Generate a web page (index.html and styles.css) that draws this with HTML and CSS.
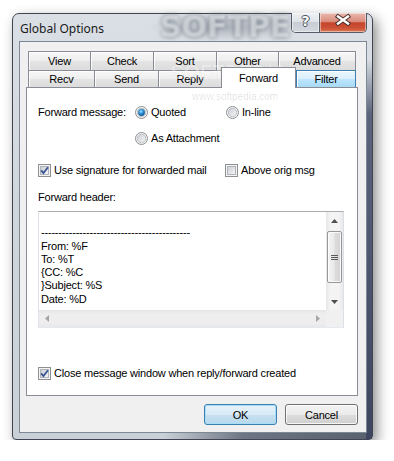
FILE: index.html
```html
<!DOCTYPE html>
<html>
<head>
<meta charset="utf-8">
<title>Global Options</title>
<link rel="stylesheet" href="styles.css">
</head>
<body>
<div class="window">
  <div class="wm-title">SOFTPE</div>
  <div class="titlebar">
    <span class="title">Global Options</span>
    <div class="caption-btns">
      <span class="cbtn help">?</span>
      <span class="cbtn close">
        <svg width="46" height="19" viewBox="0 0 46 19">
          <path d="M18 3.5 28 10.5 M28 3.5 18 10.5" stroke="#4a2f2a" stroke-width="4.4" stroke-linecap="square" fill="none"/>
          <path d="M18 3.5 28 10.5 M28 3.5 18 10.5" stroke="#ffffff" stroke-width="2.4" stroke-linecap="square" fill="none"/>
        </svg>
      </span>
    </div>
  </div>
  <div class="client">
    <div class="tabs">
      <div class="tabrow row1">
        <div class="tab w62">View</div>
        <div class="tab w63">Check</div>
        <div class="tab w63">Sort</div>
        <div class="tab w62">Other</div>
        <div class="tab w78 last">Advanced</div>
      </div>
      <div class="tabrow row2">
        <div class="tab w66">Recv</div>
        <div class="tab w64">Send</div>
        <div class="tab w63">Reply</div>
        <div class="tab w75 sel">Forward</div>
        <div class="tab w60 last hot">Filter</div>
      </div>
    </div>
    <div class="panel">
      <div class="row row-fwd">
        <span class="lbl-fwd">Forward message:</span>
        <span class="opt w91">
          <svg class="rb" width="13" height="13" viewBox="0 0 13 13"><circle cx="6.5" cy="6.5" r="6" fill="#f4f4f4" stroke="#8e8f8f"/><circle cx="6.5" cy="6.5" r="4.2" fill="url(#radIn)" stroke="#b3b7bd" stroke-width=".8"/><circle cx="6.5" cy="6.5" r="3.4" fill="url(#dot)"/></svg>
          <span>Quoted</span>
        </span>
        <span class="opt">
          <svg class="rb" width="13" height="13" viewBox="0 0 13 13"><circle cx="6.5" cy="6.5" r="6" fill="#f4f4f4" stroke="#8e8f8f"/><circle cx="6.5" cy="6.5" r="4.2" fill="url(#radIn)" stroke="#b3b7bd" stroke-width=".8"/></svg>
          <span>In-line</span>
        </span>
      </div>
      <div class="row row-att">
        <span class="opt">
          <svg class="rb" width="13" height="13" viewBox="0 0 13 13"><circle cx="6.5" cy="6.5" r="6" fill="#f4f4f4" stroke="#8e8f8f"/><circle cx="6.5" cy="6.5" r="4.2" fill="url(#radIn)" stroke="#b3b7bd" stroke-width=".8"/></svg>
          <span>As Attachment</span>
        </span>
      </div>
      <div class="row row-sig">
        <span class="opt w187">
          <svg class="cb" width="13" height="13" viewBox="0 0 13 13"><rect x=".5" y=".5" width="12" height="12" fill="#f4f4f4" stroke="#8e8f8f"/><rect x="2.5" y="2.5" width="8" height="8" fill="url(#boxIn)" stroke="#b0b5bb"/><path d="M3.2 6.4 5.4 9.1 10 3.2" fill="none" stroke="#3a5394" stroke-width="1.8"/></svg>
          <span>Use signature for forwarded mail</span>
        </span>
        <span class="opt">
          <svg class="cb" width="13" height="13" viewBox="0 0 13 13"><rect x=".5" y=".5" width="12" height="12" fill="#f4f4f4" stroke="#8e8f8f"/><rect x="2.5" y="2.5" width="8" height="8" fill="url(#boxIn)" stroke="#b0b5bb"/></svg>
          <span>Above orig msg</span>
        </span>
      </div>
      <div class="row row-hdr">Forward header:</div>
      <div class="memo">
        <div class="memo-text">
          <div>&nbsp;</div>
          <div>-------------------------------------------</div>
          <div>From: %F</div>
          <div>To: %T</div>
          <div>{CC: %C</div>
          <div>}Subject: %S</div>
          <div>Date: %D</div>
        </div>
        <div class="vscroll">
          <div class="sarrow"><svg width="7" height="4" viewBox="0 0 7 4"><polygon points="0,4 3.5,0 7,4" fill="#4f4f4f"/></svg></div>
          <div class="strack">
            <div class="thumb">
              <svg width="7" height="5" viewBox="0 0 7 5"><path d="M0 .5H7M0 2.5H7M0 4.5H7" stroke="#5a5a5a" stroke-width="1"/></svg>
            </div>
          </div>
          <div class="sarrow"><svg width="7" height="4" viewBox="0 0 7 4"><polygon points="0,0 7,0 3.5,4" fill="#4f4f4f"/></svg></div>
        </div>
        <div class="hscroll">
          <div class="harrow"><svg width="4" height="7" viewBox="0 0 4 7"><polygon points="4,0 4,7 0,3.5" fill="#a5a5a5"/></svg></div>
          <div class="harrow"><svg width="4" height="7" viewBox="0 0 4 7"><polygon points="0,0 0,7 4,3.5" fill="#a5a5a5"/></svg></div>
        </div>
        <div class="corner"></div>
      </div>
      <div class="row row-close">
        <span class="opt">
          <svg class="cb" width="13" height="13" viewBox="0 0 13 13"><rect x=".5" y=".5" width="12" height="12" fill="#f4f4f4" stroke="#8e8f8f"/><rect x="2.5" y="2.5" width="8" height="8" fill="url(#boxIn)" stroke="#b0b5bb"/><path d="M3.2 6.4 5.4 9.1 10 3.2" fill="none" stroke="#3a5394" stroke-width="1.8"/></svg>
          <span>Close message window when reply/forward created</span>
        </span>
      </div>
    </div>
    <div class="buttons">
      <button class="btn default">OK</button>
      <button class="btn">Cancel</button>
    </div>
    <div class="wm-tabs">SOFTPEDIA</div>
    <div class="wm-url">www.softpedia.com</div>
  </div>
</div>
<svg class="defs" width="0" height="0">
  <defs>
    <linearGradient id="boxIn" x1="0" y1="0" x2="1" y2="1"><stop offset="0" stop-color="#c9cdd3"/><stop offset="1" stop-color="#f7f7f7"/></linearGradient>
    <linearGradient id="radIn" x1="0" y1="0" x2="1" y2="1"><stop offset="0" stop-color="#c9cdd3"/><stop offset="1" stop-color="#f7f7f7"/></linearGradient>
    <radialGradient id="dot" cx="0.42" cy="0.35" r="0.7"><stop offset="0" stop-color="#a6e6ff"/><stop offset="0.45" stop-color="#2d90d8"/><stop offset="1" stop-color="#0b4c88"/></radialGradient>
  </defs>
</svg>
</body>
</html>
```
FILE: styles.css
```css
* { box-sizing: border-box; }
html, body { margin: 0; background: #ffffff; }
body {
  padding: 13px 0 0 12px;
  font-family: "Liberation Sans", Arial, sans-serif;
  font-size: 11px;
  letter-spacing: -0.2px;
  color: #000;
}

.window {
  position: relative;
  width: 361px;
  height: 427px;
  border: 1px solid #3f4652;
  border-radius: 7px 7px 4px 4px;
  padding: 0 5px 6px 6px;
  display: flex;
  flex-direction: column;
  box-shadow: 4px 5px 13px rgba(0, 0, 0, 0.45);
  background:
    linear-gradient(to bottom, rgba(70,78,100,0) 0, rgba(70,78,100,0) 45px, #5c647c 100px, #3e465f 100%) right top / 6px 100% no-repeat,
    linear-gradient(to right, rgba(95,102,116,0) 0, rgba(95,102,116,0) 150px, #6d7584 230px, #59616e 100%) left bottom / 100% 7px no-repeat,
    radial-gradient(ellipse 80px 14px at 215px 13px, rgba(130,138,150,0.5), rgba(130,138,150,0)),
    linear-gradient(to bottom, #dadfe5, #cfd5dc 50%, #cad0d7);
}

.wm-title {
  position: absolute;
  left: 147px;
  top: -2px;
  font-family: "DejaVu Sans", sans-serif;
  font-weight: bold;
  font-size: 30px;
  line-height: 30px;
  letter-spacing: 0;
  color: rgba(236, 239, 243, 0.7);
  text-shadow: 0 0 4px rgba(60, 68, 82, 0.75);
  filter: blur(1.2px);
}

.titlebar {
  height: 27px;
  display: flex;
  align-items: center;
  justify-content: space-between;
  padding-left: 1px;
}
.title {
  font-family: "Noto Sans", "Open Sans", sans-serif;
  font-size: 12px;
  letter-spacing: 0;
  color: #1b1b1b;
  padding-top: 1px;
}
.caption-btns {
  position: relative;
  z-index: 2;
  align-self: flex-start;
  margin-top: -1px;
  display: flex;
  height: 20px;
  border: 1px solid #555c68;
  border-top: none;
  border-radius: 0 0 5px 5px;
  overflow: hidden;
}
.cbtn {
  display: flex;
  justify-content: center;
  height: 100%;
  box-shadow: inset 0 0 0 1px rgba(255, 255, 255, 0.45);
}
.help {
  width: 28px;
  border-right: 1px solid #555c68;
  background: linear-gradient(#eef0f3, #dfe3e8 45%, #c8cdd5 50%, #d3d8df);
  font-family: "DejaVu Sans", sans-serif;
  font-weight: bold;
  font-size: 14px;
  line-height: 17px;
  letter-spacing: 0;
  color: #fff;
  text-shadow: 1px 0 0 #4b515c, -1px 0 0 #4b515c, 0 1px 0 #4b515c, 0 -1px 0 #4b515c;
}
.close {
  width: 46px;
  background: linear-gradient(#e9b8ad, #da8c7c 45%, #c5432c 52%, #cc5237 80%, #dc7853);
}

.client {
  position: relative;
  flex: 1;
  border: 1px solid #7d8897;
  background: #f0f0f0;
  padding: 9px 8px 7px 6px;
  display: flex;
  flex-direction: column;
}

.tabs { margin-left: 2px; width: 328px; }
.tabrow { display: flex; align-items: flex-start; }
.row1 { height: 19px; }
.row2 { height: 17px; }
.tab {
  display: flex;
  align-items: center;
  justify-content: center;
  border: 1px solid #898c95;
  border-right: none;
  border-bottom: none;
  background: linear-gradient(#f7f7f7, #eeeeee 50%, #e4e4e4 50%, #dcdcdc);
  box-shadow: inset 1px 1px 0 rgba(255, 255, 255, 0.85);
}
.row1 .tab { height: 19px; }
.row2 .tab { height: 17px; }
.tab.last { border-right: 1px solid #898c95; }
.tab.sel {
  position: relative;
  z-index: 1;
  height: 21px;
  margin-top: -3px;
  background: #ffffff;
  border-right: 1px solid #898c95;
  box-shadow: none;
  padding-bottom: 1px;
}
.row2 .tab.sel { height: 21px; }
.tab.hot {
  border-color: #3c7fb1;
  border-left: 1px solid #3c7fb1;
  border-right: 1px solid #3c7fb1;
  background: linear-gradient(#eaf6fd, #d9f0fc 50%, #bee6fd 50%, #a7d9f5);
}
.w60 { width: 60px; }
.w62 { width: 62px; }
.w63 { width: 63px; }
.w64 { width: 64px; }
.w66 { width: 66px; }
.w75 { width: 75px; }
.w78 { width: 78px; }

.panel {
  width: 332px;
  height: 309px;
  border: 1px solid #898c95;
  background: #ffffff;
  padding-left: 11px;
  display: flex;
  flex-direction: column;
}
.row { display: flex; align-items: center; height: 16px; }
.row-fwd { margin-top: 16px; }
.row-att { margin-top: 10px; padding-left: 97px; }
.row-sig { margin-top: 16px; }
.row-hdr { margin-top: 11px; }
.row-close { margin-top: 37px; }
.lbl-fwd { width: 97px; }
.opt { display: flex; align-items: center; gap: 3px; }
.w91 { width: 91px; }
.w187 { width: 187px; }
.rb, .cb { display: block; flex: none; }

.memo {
  margin-top: 6px;
  width: 306px;
  height: 117px;
  border: 1px solid;
  border-color: #abadb3 #dbdfe6 #e3e9ef #e2e3ea;
  display: grid;
  grid-template-columns: 1fr 17px;
  grid-template-rows: 1fr 17px;
}
.memo-text {
  padding: 1px 2px;
  line-height: 13.25px;
  overflow: hidden;
  white-space: nowrap;
}
.vscroll {
  display: flex;
  flex-direction: column;
  background: linear-gradient(to right, #e6e6e6, #f4f4f4 25%, #f4f4f4 75%, #e9e9e9);
}
.sarrow {
  height: 17px;
  display: flex;
  align-items: center;
  justify-content: center;
}
.sarrow svg, .harrow svg { display: block; }
.strack { flex: 1; padding: 2px 1px 0 1px; }
.thumb {
  height: 52px;
  border: 1px solid #979797;
  border-radius: 2px;
  background: linear-gradient(to right, #f4f4f4, #eaeaea 45%, #dcdcdc 55%, #d4d4d4);
  box-shadow: inset 0 0 0 1px rgba(255, 255, 255, 0.8);
  display: flex;
  align-items: center;
  justify-content: center;
}
.thumb svg { display: block; }
.hscroll {
  display: flex;
  justify-content: space-between;
  align-items: center;
  padding: 0 6px;
  background: linear-gradient(#e5e5e5, #eeeeee 25%, #eeeeee 75%, #e8e8e8);
}
.corner { background: #f0f0f0; }

.buttons {
  display: flex;
  justify-content: flex-end;
  gap: 8px;
  margin-top: 8px;
}
.btn {
  width: 73px;
  height: 21px;
  padding: 0;
  font: inherit;
  letter-spacing: inherit;
  color: #000;
  border: 1px solid #707070;
  border-radius: 3px;
  background: linear-gradient(#f2f2f2, #ebebeb 50%, #dddddd 50%, #cfcfcf);
  box-shadow: inset 0 0 0 1px rgba(255, 255, 255, 0.8);
}
.btn.default {
  border-color: #3c7fb1;
  background: linear-gradient(#e6f2fa, #d8eaf6 50%, #c6e0f1 50%, #bad8ec);
  box-shadow: inset 0 0 0 1px #a9dcf6;
}

.wm-tabs {
  position: absolute;
  left: 150px;
  top: 19px;
  font-family: "Liberation Sans", sans-serif;
  font-weight: bold;
  font-size: 21px;
  line-height: 21px;
  letter-spacing: -0.3px;
  color: rgba(255, 255, 255, 0.35);
  -webkit-text-stroke: 0.6px rgba(0, 0, 0, 0.09);
  pointer-events: none;
}
.wm-url {
  position: absolute;
  left: 172px;
  top: 50px;
  font-size: 10px;
  line-height: 10px;
  letter-spacing: 0;
  color: rgba(0, 0, 0, 0.13);
}

.defs { display: block; width: 0; height: 0; }
```
